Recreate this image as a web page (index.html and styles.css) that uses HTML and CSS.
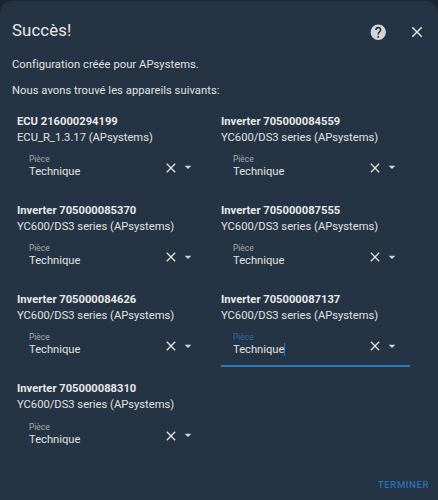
FILE: index.html
```html
<!DOCTYPE html>
<html lang="fr">
<head>
<meta charset="utf-8">
<title>Succès!</title>
<link rel="stylesheet" href="styles.css">
</head>
<body>
<div class="dialog">
  <header class="head">
    <h1 class="title">Succès!</h1>
    <svg class="help" viewBox="0 0 24 24"><path d="M15.07,11.25L14.17,12.17C13.45,12.89 13,13.5 13,15H11V14.5C11,13.39 11.45,12.39 12.17,11.67L13.41,10.41C13.78,10.05 14,9.55 14,9C14,7.89 13.1,7 12,7A2,2 0 0,0 10,9H8A4,4 0 0,1 12,5A4,4 0 0,1 16,9C16,9.88 15.64,10.67 15.07,11.25M13,19H11V17H13M12,2A10,10 0 0,0 2,12A10,10 0 0,0 12,22A10,10 0 0,0 22,12C22,6.47 17.5,2 12,2Z"/></svg>
    <svg class="close" viewBox="0 0 24 24"><path d="M19,6.41L17.59,5L12,10.59L6.41,5L5,6.41L10.59,12L5,17.59L6.41,19L12,13.41L17.59,19L19,17.59L13.41,12L19,6.41Z"/></svg>
  </header>
  <p class="line first">Configuration créée pour APsystems.</p>
  <p class="line second">Nous avons trouvé les appareils suivants:</p>
  <div class="grid">
    <section class="device">
      <div class="name">ECU 216000294199</div>
      <div class="model">ECU_R_1.3.17 (APsystems)</div>
      <div class="field">
        <div class="values"><div class="label">Pièce</div><div class="value">Technique</div></div>
        <svg class="x" viewBox="0 0 24 24"><path d="M19,6.41L17.59,5L12,10.59L6.41,5L5,6.41L10.59,12L5,17.59L6.41,19L12,13.41L17.59,19L19,17.59L13.41,12L19,6.41Z"/></svg>
        <svg class="arrow" viewBox="0 0 24 24"><path d="M7,10L12,15L17,10H7Z"/></svg>
      </div>
    </section>
    <section class="device">
      <div class="name">Inverter 705000084559</div>
      <div class="model">YC600/DS3 series (APsystems)</div>
      <div class="field">
        <div class="values"><div class="label">Pièce</div><div class="value">Technique</div></div>
        <svg class="x" viewBox="0 0 24 24"><path d="M19,6.41L17.59,5L12,10.59L6.41,5L5,6.41L10.59,12L5,17.59L6.41,19L12,13.41L17.59,19L19,17.59L13.41,12L19,6.41Z"/></svg>
        <svg class="arrow" viewBox="0 0 24 24"><path d="M7,10L12,15L17,10H7Z"/></svg>
      </div>
    </section>
    <section class="device">
      <div class="name">Inverter 705000085370</div>
      <div class="model">YC600/DS3 series (APsystems)</div>
      <div class="field">
        <div class="values"><div class="label">Pièce</div><div class="value">Technique</div></div>
        <svg class="x" viewBox="0 0 24 24"><path d="M19,6.41L17.59,5L12,10.59L6.41,5L5,6.41L10.59,12L5,17.59L6.41,19L12,13.41L17.59,19L19,17.59L13.41,12L19,6.41Z"/></svg>
        <svg class="arrow" viewBox="0 0 24 24"><path d="M7,10L12,15L17,10H7Z"/></svg>
      </div>
    </section>
    <section class="device">
      <div class="name">Inverter 705000087555</div>
      <div class="model">YC600/DS3 series (APsystems)</div>
      <div class="field">
        <div class="values"><div class="label">Pièce</div><div class="value">Technique</div></div>
        <svg class="x" viewBox="0 0 24 24"><path d="M19,6.41L17.59,5L12,10.59L6.41,5L5,6.41L10.59,12L5,17.59L6.41,19L12,13.41L17.59,19L19,17.59L13.41,12L19,6.41Z"/></svg>
        <svg class="arrow" viewBox="0 0 24 24"><path d="M7,10L12,15L17,10H7Z"/></svg>
      </div>
    </section>
    <section class="device">
      <div class="name">Inverter 705000084626</div>
      <div class="model">YC600/DS3 series (APsystems)</div>
      <div class="field">
        <div class="values"><div class="label">Pièce</div><div class="value">Technique</div></div>
        <svg class="x" viewBox="0 0 24 24"><path d="M19,6.41L17.59,5L12,10.59L6.41,5L5,6.41L10.59,12L5,17.59L6.41,19L12,13.41L17.59,19L19,17.59L13.41,12L19,6.41Z"/></svg>
        <svg class="arrow" viewBox="0 0 24 24"><path d="M7,10L12,15L17,10H7Z"/></svg>
      </div>
    </section>
    <section class="device">
      <div class="name">Inverter 705000087137</div>
      <div class="model">YC600/DS3 series (APsystems)</div>
      <div class="field focused">
        <div class="values"><div class="label">Pièce</div><div class="value"><span class="caret">Technique</span></div></div>
        <svg class="x" viewBox="0 0 24 24"><path d="M19,6.41L17.59,5L12,10.59L6.41,5L5,6.41L10.59,12L5,17.59L6.41,19L12,13.41L17.59,19L19,17.59L13.41,12L19,6.41Z"/></svg>
        <svg class="arrow" viewBox="0 0 24 24"><path d="M7,10L12,15L17,10H7Z"/></svg>
      </div>
    </section>
    <section class="device">
      <div class="name">Inverter 705000088310</div>
      <div class="model">YC600/DS3 series (APsystems)</div>
      <div class="field">
        <div class="values"><div class="label">Pièce</div><div class="value">Technique</div></div>
        <svg class="x" viewBox="0 0 24 24"><path d="M19,6.41L17.59,5L12,10.59L6.41,5L5,6.41L10.59,12L5,17.59L6.41,19L12,13.41L17.59,19L19,17.59L13.41,12L19,6.41Z"/></svg>
        <svg class="arrow" viewBox="0 0 24 24"><path d="M7,10L12,15L17,10H7Z"/></svg>
      </div>
    </section>
  </div>
  <footer class="foot"><span class="finish">TERMINER</span></footer>
</div>
</body>
</html>
```
FILE: styles.css
```css
* { box-sizing: border-box; }
html, body { margin: 0; height: 100%; background: #1a2531; }
body { font-family: Roboto, sans-serif; color: #e1e1e1; overflow: hidden; }
.dialog {
  width: 438px;
  height: 500px;
  margin-top: 1px;
  background: #253445;
  border-radius: 12px 12px 0 0;
  padding: 0 12px;
  display: flex;
  flex-direction: column;
}
.head { display: flex; align-items: center; height: 55.5px; padding-top: 2.5px; }
.title { flex: 1; margin: 0; font-size: 16.8px; font-weight: 400; line-height: 50px; color: #e8e8e8; letter-spacing: 0.1px; }
.help { width: 18.5px; height: 18.5px; fill: #d4d4d4; margin-right: 20.5px; margin-top: 4px; }
.close { width: 18px; height: 18px; fill: #e1e1e1; margin-right: 0; margin-top: 4px; }
.line { margin: 0; font-size: 11.2px; line-height: 16px; letter-spacing: 0.05px; }
.first { margin-bottom: 10.5px; }
.second { margin-bottom: 14.5px; }
.grid { display: grid; grid-template-columns: 204px 204px; column-gap: 0; padding-left: 5px; }
.device { height: 89.2px; }
.name { font-size: 11.2px; font-weight: 700; line-height: 16px; color: #e8e8e8; }
.model { font-size: 11.2px; line-height: 16px; }
.field { display: flex; align-items: flex-start; width: 189px; height: 38.4px; margin-top: 4.6px; padding: 4px 0 0 12px; border-bottom: 1px solid transparent; }
.values { flex: 1; }
.label { font-size: 8.4px; line-height: 10px; color: #a9a9a9; }
.value { font-size: 11.2px; line-height: 16px; }
.x { width: 16px; height: 16px; fill: #e1e1e1; margin-top: 5.9px; margin-right: 1px; }
.arrow { width: 16px; height: 16px; fill: #d6d6d6; margin-top: 5.4px; margin-right: 10.5px; }
.focused { border-bottom: 2px solid #2a78b9; }
.focused .label { color: #2a6ca8; }
.caret { border-right: 1px solid #2a78b9; }
.foot { margin-top: auto; display: flex; justify-content: flex-end; padding: 0 0 9px 0; margin-right: -3px; }
.finish { font-size: 9.6px; font-weight: 500; letter-spacing: 0.55px; line-height: 14px; color: #2a72b2; }
```
